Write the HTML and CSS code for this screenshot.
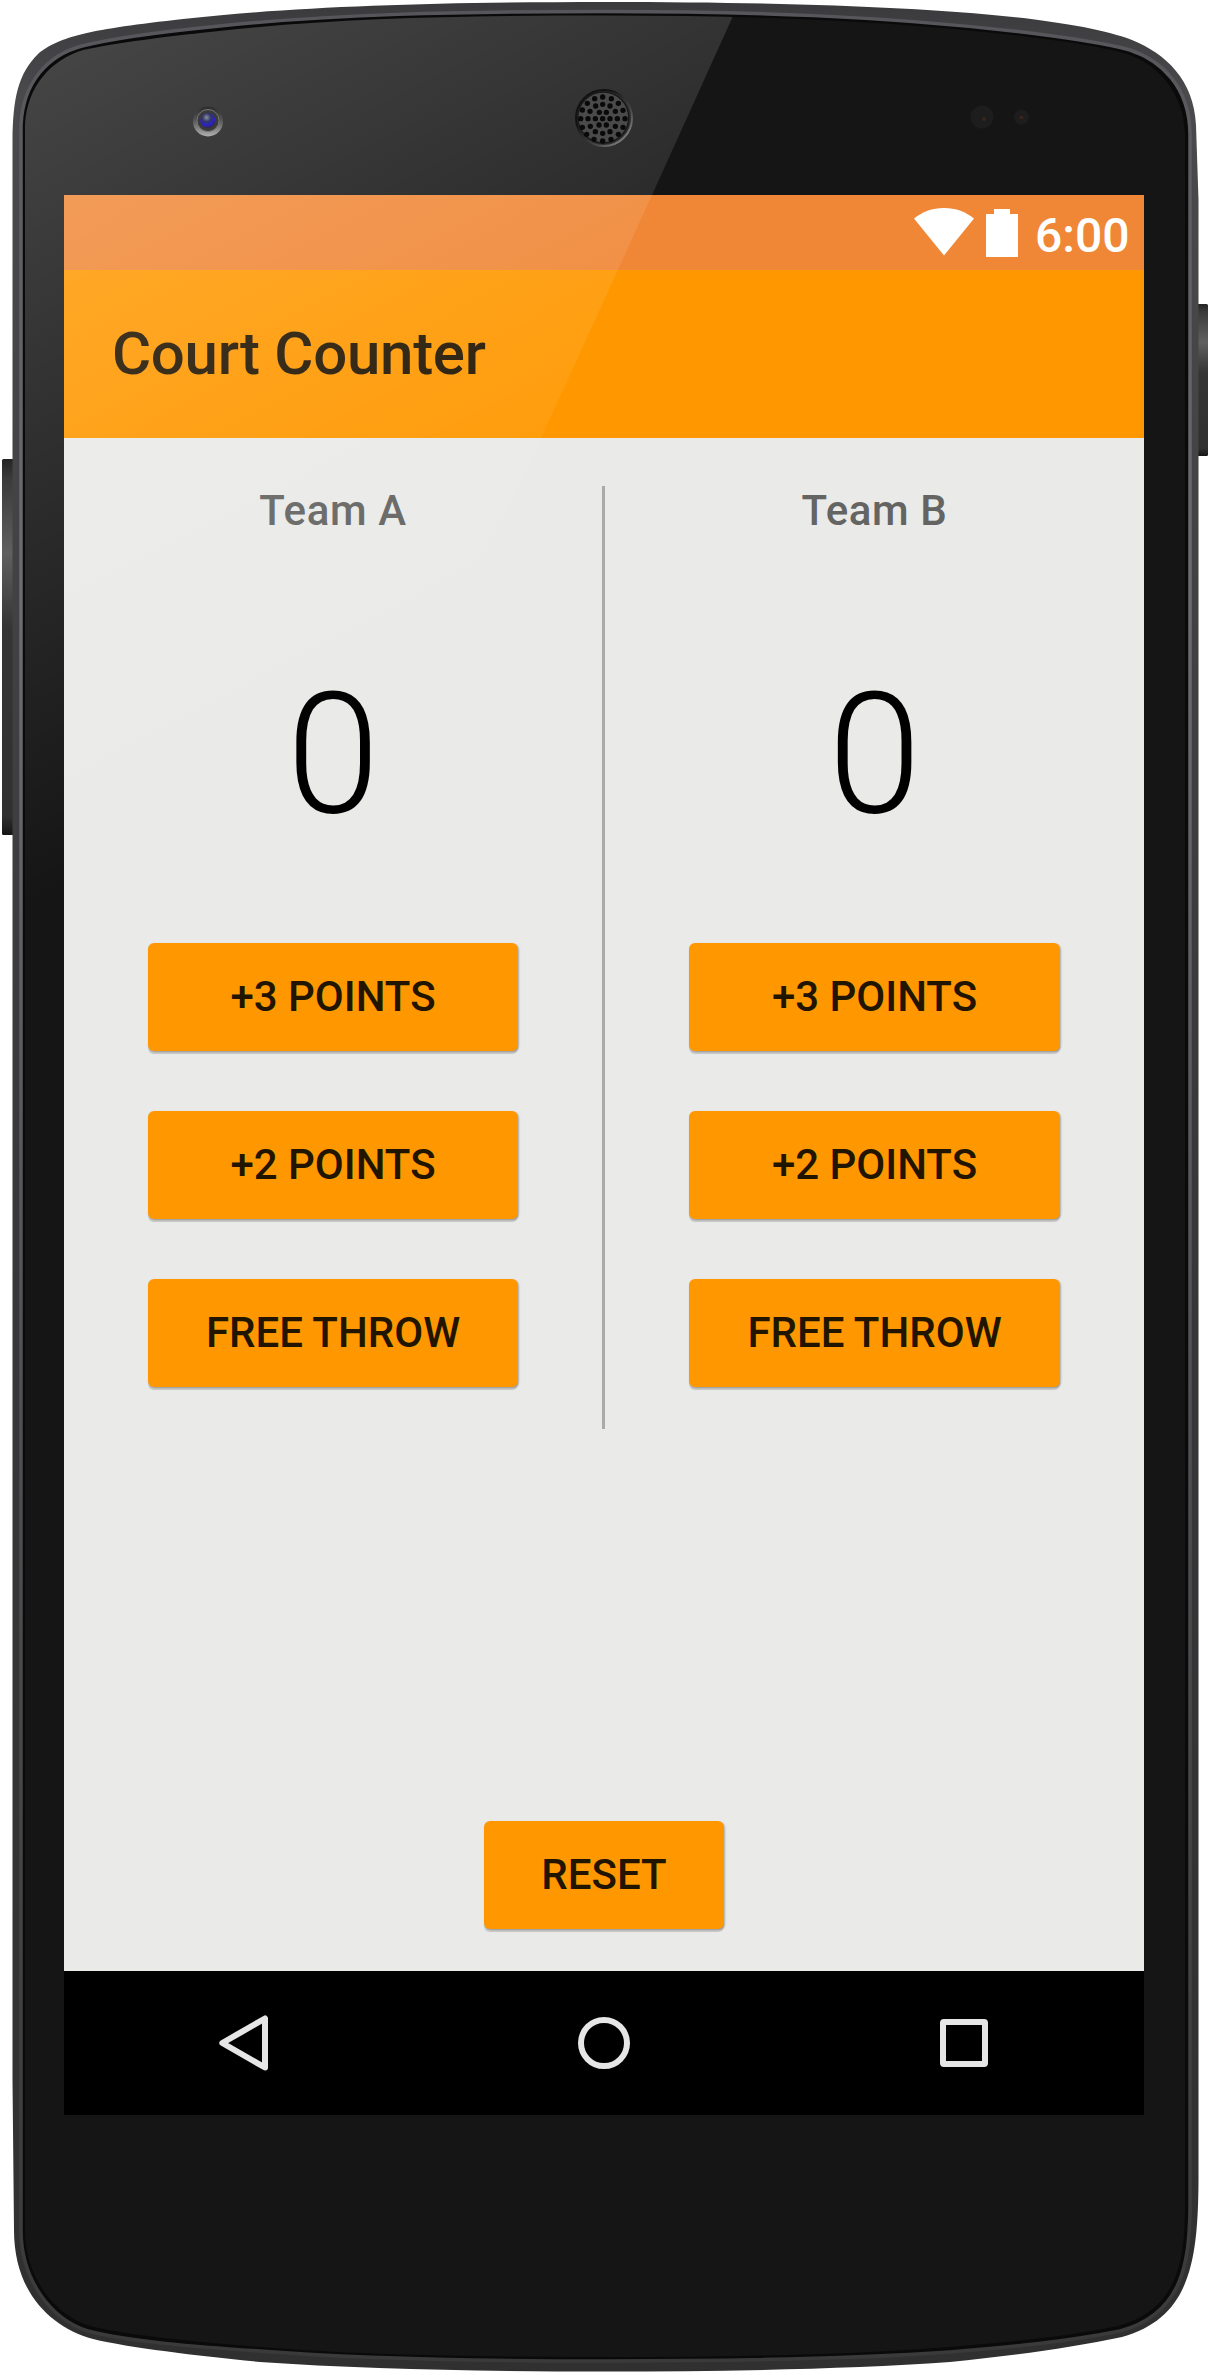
FILE: index.html
```html
<!DOCTYPE html>
<html lang="en">
<head>
<meta charset="utf-8">
<title>Court Counter</title>
<link rel="stylesheet" href="styles.css">
</head>
<body>
<div class="device">
  <svg class="shell" viewBox="0 0 1210 2375" aria-hidden="true">
    <defs>
      <linearGradient id="rim" x1="0" y1="0" x2="0" y2="2375" gradientUnits="userSpaceOnUse">
        <stop offset="0" stop-color="#3a3a3c"/><stop offset=".04" stop-color="#4a4a4d"/>
        <stop offset=".5" stop-color="#38383a"/><stop offset="1" stop-color="#303030"/>
      </linearGradient>
      <linearGradient id="edge" x1="0" y1="0" x2="0" y2="2375" gradientUnits="userSpaceOnUse">
        <stop offset="0" stop-color="#55555a"/><stop offset=".25" stop-color="#6c6c71"/>
        <stop offset=".6" stop-color="#505054"/><stop offset=".9" stop-color="#3e3e3f"/><stop offset="1" stop-color="#3a3a3a"/>
      </linearGradient>
      <linearGradient id="key" x1="0" y1="0" x2="0" y2="1">
        <stop offset="0" stop-color="#242424"/><stop offset=".05" stop-color="#3a3a3a"/>
        <stop offset=".25" stop-color="#606060"/><stop offset=".45" stop-color="#353535"/>
        <stop offset=".95" stop-color="#303030"/><stop offset="1" stop-color="#151515"/>
      </linearGradient>
      <linearGradient id="lensRing" x1="0" y1="0" x2="0" y2="1">
        <stop offset="0" stop-color="#2c2c2c"/><stop offset=".45" stop-color="#555"/><stop offset="1" stop-color="#b0b0b0"/>
      </linearGradient>
      <radialGradient id="lens" cx=".42" cy=".3" r=".7">
        <stop offset="0" stop-color="#8a929c"/><stop offset=".4" stop-color="#34366a"/>
        <stop offset=".75" stop-color="#2a22c8"/><stop offset="1" stop-color="#30284a"/>
      </radialGradient>
      <linearGradient id="speakerRing" x1="0" y1="0" x2="1" y2="1">
        <stop offset=".3" stop-color="#111"/><stop offset=".65" stop-color="#444"/><stop offset=".85" stop-color="#777"/>
      </linearGradient>
    </defs>
    <rect x="2" y="459" width="14" height="376" rx="1.5" fill="url(#key)"/>
    <rect x="1194" y="304" width="14" height="152" rx="1.5" fill="url(#key)"/>
    <path fill="url(#rim)" d="M12.500 200V140C13 98 18 74 38 54C60 36 90 29.500 183 19C290 7 430 2 605 2C780 2 915 7 1013 17C1066 23 1105 30 1132 40C1166 54 1194 80 1196 125L1198.500 200V2180C1198 2262 1190 2318 1122 2337C1070 2348 1010 2356 950 2362C850 2369 730 2371.500 605 2371.500C480 2371.500 360 2369 260 2362C200 2356 130 2348 93 2339C50 2327 14 2292 14 2230L12.500 2080Z"/>
    <path fill="#0a0a0b" stroke="url(#edge)" stroke-width="3.500" d="M21 200V125C23 82 48 55 82 46C115 38 170 31 210 27C330 14 460 11.500 605 11.500C750 11.500 880 16 1013 31C1055 36 1100 42 1130 50C1160 60 1190 86 1190 135V2210C1189 2262 1183 2314 1120 2331C1065 2342 1010 2347 950 2352C850 2359 730 2361 605 2361C480 2361 360 2359 260 2351C200 2347 130 2342 88 2331C50 2319 21 2279 21 2230Z"/>
    <path id="face" fill="#151515" d="M25 200V125C27 86 51 60 83 50C115 43 170 36 210 32C330 18 460 15.500 605 15.500C750 15.500 880 20 1013 35C1055 40 1098 46 1127 54C1155 63 1184 90 1185 135V2210C1184 2258 1180 2309 1118 2326C1065 2337 1010 2342 950 2347C850 2355 730 2357 605 2357C480 2357 360 2355 260 2347C200 2342 130 2336 90 2326C52 2314 25 2275 25 2230Z"/>
  </svg>

  <main class="screen">
    <header class="status-bar">
      <svg class="wifi" width="60" height="48" viewBox="0 0 60 48"><path fill="#fff" d="M0 10.600C8 4 18 0 30 0S52 4 60 10.600L30 47.500Z"/></svg>
      <svg class="battery" width="32" height="48" viewBox="0 0 32 48"><path fill="#fff" d="M8 0H24V5H32V48H0V5H8Z"/></svg>
      <span class="clock">6:00</span>
    </header>
    <div class="app-bar"><h1 class="title">Court Counter</h1></div>
    <div class="content">
      <div class="teams">
        <section class="team">
          <h2 class="team-name">Team A</h2>
          <div class="score">0</div>
          <div class="actions">
            <button class="btn">+3 POINTS</button>
            <button class="btn">+2 POINTS</button>
            <button class="btn">FREE THROW</button>
          </div>
        </section>
        <div class="divider"></div>
        <section class="team">
          <h2 class="team-name">Team B</h2>
          <div class="score">0</div>
          <div class="actions">
            <button class="btn">+3 POINTS</button>
            <button class="btn">+2 POINTS</button>
            <button class="btn">FREE THROW</button>
          </div>
        </section>
      </div>
      <button class="btn reset">RESET</button>
    </div>
    <nav class="nav-bar">
      <svg width="60" height="60" viewBox="0 0 60 60"><path d="M51 5.500V54.500L8.300 30Z"/></svg>
      <svg width="60" height="60" viewBox="0 0 60 60"><circle cx="30" cy="30" r="23"/></svg>
      <svg width="60" height="60" viewBox="0 0 60 60"><rect x="9" y="9" width="42" height="42" rx="1"/></svg>
    </nav>
  </main>

  <svg class="glass" viewBox="0 0 1210 2375" aria-hidden="true">
    <defs>
      <linearGradient id="shine" x1="0" y1="0" x2="374" y2="730" gradientUnits="userSpaceOnUse">
        <stop offset="0" stop-color="#fff" stop-opacity=".225"/><stop offset="1" stop-color="#fff" stop-opacity="0"/>
      </linearGradient>
      <clipPath id="faceClip"><use href="#face"/></clipPath>
    </defs>
    <path clip-path="url(#faceClip)" fill="url(#shine)" d="M0 0H740.500L733 16L652 195L541 438L360 835L0 1000Z"/>
    <g>
      <circle cx="208" cy="121.500" r="15" fill="url(#lensRing)"/>
      <circle cx="208" cy="120.500" r="11" fill="#3a3a3a" stroke="#777" stroke-width="1"/>
      <circle cx="207.800" cy="120.500" r="7.500" fill="url(#lens)"/>
    </g>
    <circle cx="982" cy="117" r="11.500" fill="#1d1d1d"/><circle cx="984" cy="119" r="2" fill="#3a241d"/>
    <circle cx="1021.500" cy="117" r="7.500" fill="#1d1d1d"/><circle cx="1021.500" cy="117.500" r="2" fill="#3a241d"/>
    <circle cx="604" cy="118" r="28" fill="#303030" stroke="url(#speakerRing)" stroke-width="2"/>
    <circle cx="603.300" cy="117.500" r="25.500" fill="#4a4a4a" stroke="#191919" stroke-width="1.500"/>
    <g transform="translate(500 0) scale(.33333)" fill="none" stroke="#090909" stroke-width="16" stroke-linecap="round">
      <path d="M308 291h.1M334 296h.1M355 310h.1M369 331h.1M375 356h.1M369 382h.1M355 403h.1M333 418h.1M308 423h.1M282 418h.1M260 403h.1M247 382h.1M242 356h.1M247 330h.1M262 310h.1M284 296h.1M308 313h.1M330 318h.1M346 334h.1M352 356h.1M346 379h.1M330 395h.1M308 400h.1M286 395h.1M271 379h.1M264 356h.1M270 334h.1M287 318h.1M298 337h.1M319 337h.1M330 356h.1M319 375h.1M297 375h.1M286 356h.1M308 356h.1"/>
    </g>
  </svg>
</div>
</body>
</html>
```
FILE: styles.css
```css
* {
  box-sizing: border-box;
}

body {
  margin: 0;
  background: #fff;
  font-family: Roboto, "Liberation Sans", sans-serif;
}

.device {
  position: relative;
  width: 1210px;
  height: 2375px;
  padding: 195px 66px 260px 64px;
  overflow: hidden;
}

.shell,
.glass {
  position: absolute;
  inset: 0;
  width: 1210px;
  height: 2375px;
}

.glass {
  pointer-events: none;
}

.screen {
  position: relative;
  display: flex;
  flex-direction: column;
  width: 1080px;
  height: 1920px;
  background: #eaeae8;
}

.status-bar {
  display: flex;
  justify-content: flex-end;
  align-items: flex-start;
  height: 75px;
  padding: 0 14.5px 0 0;
  background: #f08736;
  color: #fff;
}

.wifi {
  margin: 12.7px 12px 0 0;
}

.battery {
  margin: 14px 17.5px 0 0;
}

.clock {
  margin-top: 13px;
  font-size: 48px;
  font-weight: 500;
  line-height: 56px;
}

.app-bar {
  display: flex;
  align-items: center;
  height: 168px;
  padding: 0 48px 2px;
  background: #ff9800;
}

.title {
  margin: 0;
  font-size: 60px;
  font-weight: 500;
  letter-spacing: -0.3px;
  color: rgba(0, 0, 0, 0.87);
}

.content {
  display: flex;
  flex: 1;
  flex-direction: column;
  align-items: center;
  justify-content: space-between;
  padding: 48px 0 42px;
}

.teams {
  display: grid;
  grid-template-columns: 538px 3px 539px;
  height: 943px;
}

.team {
  text-align: center;
}

.divider {
  background: #aaa;
}

.team-name {
  margin: 0 0 121px;
  font-size: 42px;
  font-weight: 500;
  line-height: 49px;
  letter-spacing: 0.6px;
  color: #646463;
}

.score {
  height: 197px;
  margin-bottom: 90px;
  font-size: 168px;
  font-weight: 300;
  line-height: 197px;
  color: #000;
}

.actions {
  display: flex;
  flex-direction: column;
  gap: 60px;
  margin: 0 84px;
}

.btn {
  height: 108px;
  padding: 0 0 2px;
  border: 0;
  border-radius: 6px;
  background: #ff9800;
  box-shadow: 1px 1px 2px rgba(0, 0, 0, 0.25), 0 3px 1px rgba(0, 0, 0, 0.14);
  font-family: inherit;
  font-size: 42px;
  font-weight: 500;
  color: #221500;
}

.reset {
  width: 240px;
}

.nav-bar {
  display: grid;
  grid-template-columns: repeat(3, 360px);
  place-items: center;
  height: 144px;
  background: #000;
}

.nav-bar svg {
  fill: none;
  stroke: #e6e6e6;
  stroke-width: 6;
  stroke-linejoin: round;
}
```
